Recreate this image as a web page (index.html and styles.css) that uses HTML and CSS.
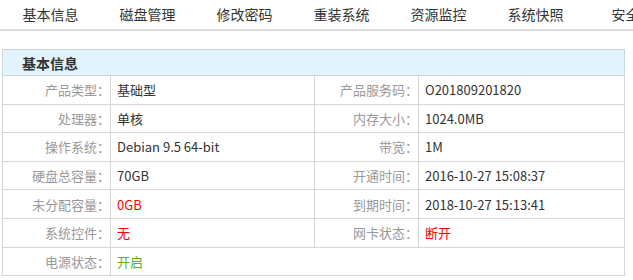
FILE: index.html
```html
<!DOCTYPE html>
<html lang="zh-CN">
  <head>
    <meta charset="UTF-8">
    <title>基本信息</title>
    <link rel="stylesheet" href="styles.css">
  </head>
  <body>
    <div class="tabs">
      <a class="tab active">基本信息</a>
      <a class="tab">磁盘管理</a>
      <a class="tab">修改密码</a>
      <a class="tab">重装系统</a>
      <a class="tab">资源监控</a>
      <a class="tab">系统快照</a>
      <a class="tab">安全组</a>
    </div>

    <table class="info">
      <colgroup>
        <col class="c-label">
        <col class="c-value">
        <col class="c-label2">
        <col>
      </colgroup>
      <tr>
        <th colspan="4">基本信息</th>
      </tr>
      <tr>
        <td class="label">产品类型：</td>
        <td>基础型</td>
        <td class="label">产品服务码：</td>
        <td>O201809201820</td>
      </tr>
      <tr>
        <td class="label">处理器：</td>
        <td>单核</td>
        <td class="label">内存大小：</td>
        <td>1024.0MB</td>
      </tr>
      <tr>
        <td class="label">操作系统：</td>
        <td>Debian 9.5 64-bit</td>
        <td class="label">带宽：</td>
        <td>1M</td>
      </tr>
      <tr>
        <td class="label">硬盘总容量：</td>
        <td>70GB</td>
        <td class="label">开通时间：</td>
        <td>2016-10-27 15:08:37</td>
      </tr>
      <tr>
        <td class="label">未分配容量：</td>
        <td class="red">0GB</td>
        <td class="label">到期时间：</td>
        <td>2018-10-27 15:13:41</td>
      </tr>
      <tr>
        <td class="label">系统控件：</td>
        <td class="red">无</td>
        <td class="label">网卡状态：</td>
        <td class="red">断开</td>
      </tr>
      <tr>
        <td class="label">电源状态：</td>
        <td class="green last" colspan="3">开启</td>
      </tr>
    </table>
  </body>
</html>
```

FILE: styles.css
```css
body {
  margin: 0;
  font-family: "Noto Sans CJK SC", "Noto Sans", sans-serif;
  color: #333;
  background: #fff;
}

.tabs {
  display: flex;
  height: 29px;
  padding-left: 2px;
  border-bottom: 2px solid #dcdcdc;
  overflow: hidden;
  white-space: nowrap;
}

.tab {
  flex: 0 0 97px;
  height: 29px;
  line-height: 29px;
  text-align: center;
  font-size: 14px;
  color: #333;
  box-sizing: border-box;
}

.tab.active {
  border-bottom: 2px solid #2c3c9c;
  height: 31px;
}

.info {
  margin: 18px 0 0 2px;
  width: 623px;
  border-collapse: collapse;
  border: 1px solid #cfcfcf;
  font-size: 13px;
  table-layout: fixed;
}

.c-label { width: 108px; }
.c-value { width: 204px; }
.c-label2 { width: 104px; }

.info th {
  height: 25px;
  padding: 0 0 0 19px;
  text-align: left;
  font-size: 14px;
  font-weight: bold;
  color: #333;
  background: #e2f3fc;
  border: 1px solid #c8d8e0;
}

.info td {
  height: 27.6px;
  padding: 0 0 0 6px;
  border: 1px solid #d6d6d6;
  color: #333;
  white-space: nowrap;
}

.info td.label {
  padding: 0;
  text-align: right;
  color: #999;
}

.info td.red { color: #f00; }
.info td.green { color: #5fae1e; }
```
